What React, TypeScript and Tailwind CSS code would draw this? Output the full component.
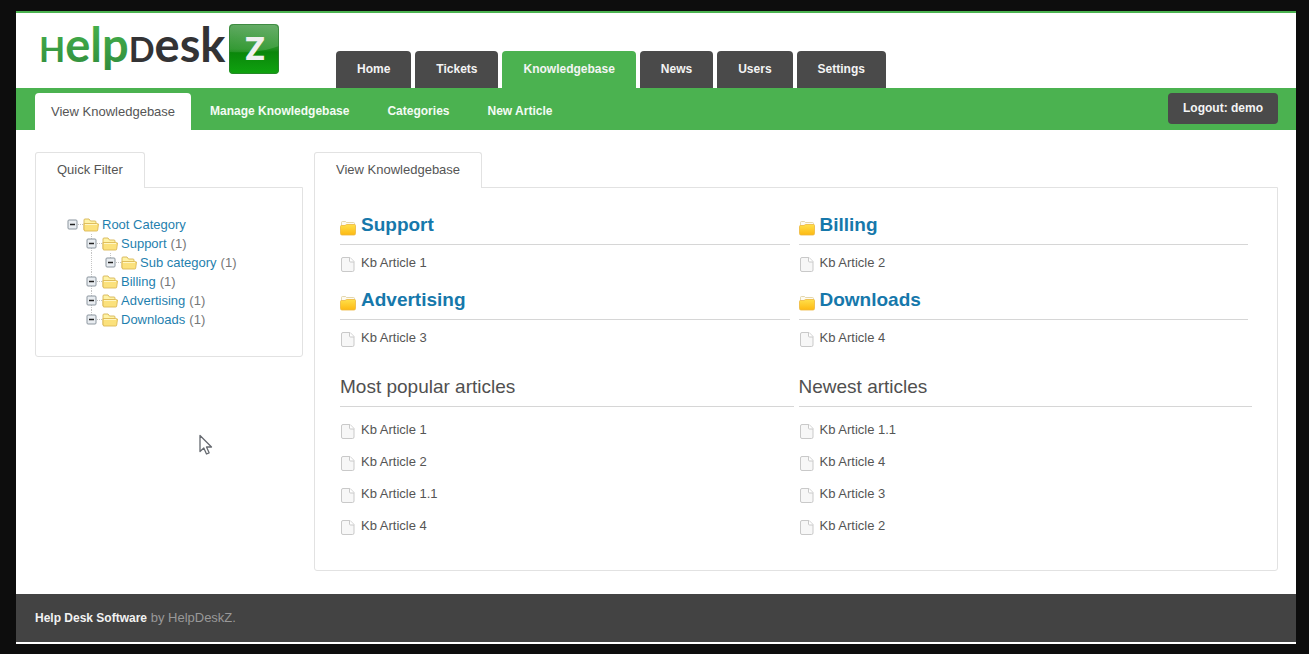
import { ReactNode } from "react";

type TreeNode = { label: string; count?: number; depth: number; line: "none" | "full" | "end" };

const tree: TreeNode[] = [
  { label: "Root Category", depth: 0, line: "none" },
  { label: "Support", count: 1, depth: 1, line: "full" },
  { label: "Sub category", count: 1, depth: 2, line: "end" },
  { label: "Billing", count: 1, depth: 1, line: "full" },
  { label: "Advertising", count: 1, depth: 1, line: "full" },
  { label: "Downloads", count: 1, depth: 1, line: "end" },
];

const categories = [
  { name: "Support", article: "Kb Article 1" },
  { name: "Billing", article: "Kb Article 2" },
  { name: "Advertising", article: "Kb Article 3" },
  { name: "Downloads", article: "Kb Article 4" },
];

const popular = ["Kb Article 1", "Kb Article 2", "Kb Article 1.1", "Kb Article 4"];
const newest = ["Kb Article 1.1", "Kb Article 4", "Kb Article 3", "Kb Article 2"];

const mainTabs = ["Home", "Tickets", "Knowledgebase", "News", "Users", "Settings"];
const subTabs = ["Manage Knowledgebase", "Categories", "New Article"];

function Logo() {
  return (
    <svg width="244" height="75" viewBox="0 0 244 75" role="img" aria-label="HelpDeskZ">
      <defs>
        <linearGradient id="word-green" gradientUnits="userSpaceOnUse" x1="0" y1="11" x2="0" y2="61">
          <stop offset="0" stopColor="#45b04c" />
          <stop offset="1" stopColor="#2f8a3c" />
        </linearGradient>
        <linearGradient id="box-green" x1="0" y1="0" x2="0" y2="1">
          <stop offset="0" stopColor="#5aa65c" />
          <stop offset="0.5" stopColor="#1f8f1f" />
          <stop offset="0.56" stopColor="#0a860a" />
          <stop offset="1" stopColor="#0fa30f" />
        </linearGradient>
        <linearGradient id="box-shine" x1="0" y1="0" x2="1" y2="1">
          <stop offset="0" stopColor="#ffffff" stopOpacity="0.04" />
          <stop offset="1" stopColor="#ffffff" stopOpacity="0.16" />
        </linearGradient>
      </defs>
      <text x="1" y="49" fontFamily="Lato, sans-serif" fontWeight="700" fontSize="47" fill="url(#word-green)">
        <tspan fontSize="34">H</tspan>elp<tspan fontSize="34" fill="#333335">D</tspan>
        <tspan fill="#333335">esk</tspan>
      </text>
      <g transform="translate(191 11)">
        <rect width="50" height="50" rx="4" fill="url(#box-green)" />
        <path d="M0 28V4a4 4 0 0 1 4-4h42a4 4 0 0 1 4 4v18c-16 6-33 7-50 6z" fill="url(#box-shine)" />
        <rect x="0.500" y="0.500" width="49" height="49" rx="4" fill="none" stroke="#2f7d33" strokeOpacity="0.7" />
      </g>
      <text x="217" y="47" textAnchor="middle" fontFamily="Inter, sans-serif" fontWeight="800" fontSize="31" fill="#f0f0f0">
        Z
      </text>
    </svg>
  );
}

function FolderIcon() {
  return (
    <svg className="shrink-0" width="16" height="22" viewBox="0 0 16 22" aria-hidden="true">
      <defs>
        <linearGradient id="folder-fill" x1="0" y1="0" x2="0" y2="1">
          <stop offset="0" stopColor="#ffe04a" />
          <stop offset="1" stopColor="#fdb913" />
        </linearGradient>
      </defs>
      <path d="M1.500 13V8.500a1 1 0 0 1 1-1h3l1 1h7a1 1 0 0 1 1 1V13z" fill="#fdfaf0" stroke="#dccb9a" strokeWidth="0.800" />
      <path d="M0.500 12.500a1 1 0 0 1 1-1h3.500l1.500-1h8a1 1 0 0 1 1 1v8a1.500 1.500 0 0 1-1.500 1.500H2a1.500 1.500 0 0 1-1.500-1.500z" fill="url(#folder-fill)" stroke="#edb73c" strokeWidth="0.800" />
    </svg>
  );
}

function DocIcon() {
  return (
    <svg className="shrink-0" width="16" height="20" viewBox="0 0 16 20" aria-hidden="true">
      <path d="M3 4.500h7l4 4V17a1.500 1.500 0 0 1-1.500 1.500H3A1.500 1.500 0 0 1 1.500 17V6A1.500 1.500 0 0 1 3 4.500z" fill="#f7f7f7" stroke="#c9c9c9" />
      <path d="M9.500 4.500V8a1 1 0 0 0 1 1H14" fill="#ffffff" stroke="#c9c9c9" />
    </svg>
  );
}

function TreeFolderIcon() {
  return (
    <svg className="shrink-0" width="16" height="14" viewBox="0 0 16 14" aria-hidden="true">
      <path d="M1 12V2a1 1 0 0 1 1-1h4l1.500 2H12a1 1 0 0 1 1 1v2" fill="#fff3a6" stroke="#d6b656" strokeWidth="0.900" />
      <path d="M1.500 13 1 11V5.500h12.500l2 .5-.8 6a1 1 0 0 1-1 1z" fill="#fbe17c" stroke="#dcb955" strokeWidth="0.900" />
      <path d="M2 6.500h12" stroke="#fff6c4" />
    </svg>
  );
}

function Guide() {
  return (
    <svg className="shrink-0" width="19" height="19" aria-hidden="true">
      <path d="M5.500 0v19" stroke="#c4c4c4" strokeDasharray="1 1" />
    </svg>
  );
}

function Toggle({ line }: { line: TreeNode["line"] }) {
  return (
    <svg width="16" height="19" viewBox="0 0 16 19" aria-hidden="true">
      {line !== "none" && <path d="M5.500 0v5" stroke="#c4c4c4" strokeDasharray="1 1" />}
      {line === "full" && <path d="M5.500 14v5" stroke="#c4c4c4" strokeDasharray="1 1" />}
      <path d="M11 9.500h5" stroke="#c4c4c4" strokeDasharray="1 1" />
      <rect x="1" y="5" width="9" height="9" rx="1" fill="#e9edf1" stroke="#8b959e" />
      <path d="M3 9.500h5" stroke="#222222" strokeWidth="1.500" />
    </svg>
  );
}

function Panel({ title, className, children }: { title: string; className: string; children: ReactNode }) {
  return (
    <section className={className}>
      <div className="flex">
        <h2 className="z-10 -mb-px rounded-t-[3px] border border-b-0 border-[#e2e2e2] bg-white px-[21px] pt-2 pb-[9px] text-[13px] leading-[18px] text-[#555]">
          {title}
        </h2>
      </div>
      <div className="rounded-b-[3px] border border-[#e2e2e2]">{children}</div>
    </section>
  );
}

function ArticleLink({ title, className }: { title: string; className: string }) {
  return (
    <a href="#" className={`flex items-center gap-[5px] text-[13px] text-[#555] ${className}`}>
      <DocIcon />
      {title}
    </a>
  );
}

function ArticleList({ title, items }: { title: string; items: string[] }) {
  return (
    <div>
      <h3 className="mb-[7px] border-b border-[#d6d6d6] text-[19px] leading-[38px] text-[#505050]">{title}</h3>
      <ul>
        {items.map((item) => (
          <li key={item}>
            <ArticleLink title={item} className="h-8" />
          </li>
        ))}
      </ul>
    </div>
  );
}

export default function App() {
  return (
    <div className="relative flex min-h-screen flex-col bg-[#0d0d0d] pt-[11px] pr-[13px] pb-[10px] pl-4 font-['Liberation_Sans',Arial,sans-serif]">
      <div className="flex flex-1 flex-col border-t-2 border-b-2 border-t-[#4bb250] border-b-white bg-white">
        <header className="flex items-end pl-[22px]">
          <Logo />
          <nav className="ml-[54px] flex gap-1" aria-label="Main">
            {mainTabs.map((tab) => (
              <a
                key={tab}
                href="#"
                className={`rounded-t-[4px] px-[21px] text-[12px] leading-[37px] font-bold text-[#f4f4f4] ${
                  tab === "Knowledgebase" ? "bg-[#4bb250]" : "bg-[#4a4a4a]"
                }`}
              >
                {tab}
              </a>
            ))}
          </nav>
        </header>

        <nav className="flex items-start bg-[#4bb250] pt-[5px] pr-[18px] pl-[19px]" aria-label="Knowledgebase">
          <a href="#" className="rounded-t-[4px] bg-white px-4 text-[13px] leading-[37px] text-[#555]">
            View Knowledgebase
          </a>
          {subTabs.map((tab) => (
            <a key={tab} href="#" className="px-[19px] text-[12px] leading-[37px] font-bold text-[#f4fbf4]">
              {tab}
            </a>
          ))}
          <button type="button" className="ml-auto rounded-[4px] bg-[#4a4a4a] px-[15px] text-[12px] leading-[31px] font-bold text-[#f4f4f4]">
            Logout: demo
          </button>
        </nav>

        <main className="flex flex-1 items-start gap-[11px] pt-[22px] pr-[18px] pb-[22px] pl-[19px]">
          <Panel title="Quick Filter" className="w-[268px] shrink-0">
            <ul className="pt-[27px] pr-4 pb-[27px] pl-[31px]">
              {tree.map((node) => (
                <li key={node.label} className="flex h-[19px] items-center text-[13px] text-[#777]">
                  {node.depth === 1 && <span className="w-[19px] shrink-0" />}
                  {node.depth === 2 && (
                    <>
                      <span className="w-[19px] shrink-0" />
                      <Guide />
                    </>
                  )}
                  <button type="button" className="h-[19px] w-4 shrink-0" aria-label={`Collapse ${node.label}`}>
                    <Toggle line={node.line} />
                  </button>
                  <TreeFolderIcon />
                  <a href="#" className="ml-[3px] text-[#1f7fae]">
                    {node.label}
                  </a>
                  {node.count !== undefined && <span className="ml-1">({node.count})</span>}
                </li>
              ))}
            </ul>
          </Panel>

          <Panel title="View Knowledgebase" className="min-w-0 flex-1">
            <div className="px-[25px] pt-[18px] pb-7">
              <div className="grid grid-cols-2 gap-x-[5px]">
                {categories.map((category) => (
                  <div key={category.name} className="pr-1">
                    <h3 className="border-b border-[#d6d6d6] text-[19px] leading-[38px] font-bold text-[#1678ab]">
                      <a href="#" className="flex items-center gap-[5px]">
                        <FolderIcon />
                        {category.name}
                      </a>
                    </h3>
                    <ArticleLink title={category.article} className="h-9" />
                  </div>
                ))}
              </div>
              <div className="mt-3 grid grid-cols-2 gap-x-[5px]">
                <ArticleList title="Most popular articles" items={popular} />
                <ArticleList title="Newest articles" items={newest} />
              </div>
            </div>
          </Panel>
        </main>

        <footer className="bg-[#434343] px-[19px] text-[13px] leading-[48px] text-[#999]">
          <a href="#" className="text-[12px] font-bold text-[#f2f2f2]">
            Help Desk Software
          </a>{" "}
          by HelpDeskZ.
        </footer>
      </div>

      <svg className="pointer-events-none absolute top-[434px] left-[198px]" width="15" height="23" viewBox="0 0 15 23" aria-hidden="true">
        <path d="M2 1.500v16l3.800-3.500 2.700 6 2.600-1.200L8.500 13h5z" fill="#ffffff" stroke="#666a70" strokeWidth="1.300" strokeLinejoin="round" />
      </svg>
    </div>
  );
}
